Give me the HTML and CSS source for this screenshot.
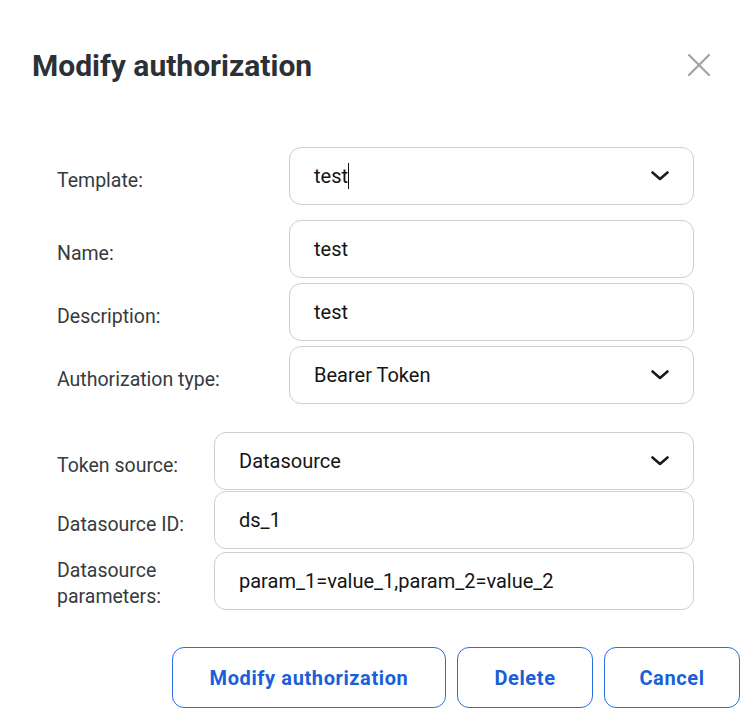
FILE: index.html
```html
<!DOCTYPE html>
<html>
<head>
<meta charset="utf-8">
<link rel="stylesheet" href="styles.css">
</head>
<body>
<div class="dialog">
  <div class="header">
    <h1 class="title">Modify authorization</h1>
    <button class="close" aria-label="Close">
      <svg width="22" height="22" viewBox="0 0 22 22"><path d="M1 1 L21 21 M21 1 L1 21" stroke="#a3a3a3" stroke-width="2.2" fill="none" stroke-linecap="round"/></svg>
    </button>
  </div>
  <div class="form">
    <div class="group group-a">
      <div class="row r-first">
        <label class="label">Template:</label>
        <div class="field select"><span class="value">test<span class="caret"></span></span>
          <svg class="chev" width="18" height="10" viewBox="0 0 18 10"><path d="M1.5 1.5 L9 8 L16.5 1.5" stroke="#1b1b1b" stroke-width="2.6" fill="none" stroke-linecap="round" stroke-linejoin="round"/></svg>
        </div>
      </div>
      <div class="row r-name">
        <label class="label">Name:</label>
        <div class="field"><span class="value">test</span></div>
      </div>
      <div class="row r-tight">
        <label class="label">Description:</label>
        <div class="field"><span class="value">test</span></div>
      </div>
      <div class="row r-tight">
        <label class="label">Authorization type:</label>
        <div class="field select"><span class="value">Bearer Token</span>
          <svg class="chev" width="18" height="10" viewBox="0 0 18 10"><path d="M1.5 1.5 L9 8 L16.5 1.5" stroke="#1b1b1b" stroke-width="2.6" fill="none" stroke-linecap="round" stroke-linejoin="round"/></svg>
        </div>
      </div>
    </div>
    <div class="group group-b">
      <div class="row">
        <label class="label">Token source:</label>
        <div class="field select"><span class="value">Datasource</span>
          <svg class="chev" width="18" height="10" viewBox="0 0 18 10"><path d="M1.5 1.5 L9 8 L16.5 1.5" stroke="#1b1b1b" stroke-width="2.6" fill="none" stroke-linecap="round" stroke-linejoin="round"/></svg>
        </div>
      </div>
      <div class="row r-adj">
        <label class="label">Datasource ID:</label>
        <div class="field"><span class="value">ds_1</span></div>
      </div>
      <div class="row r-tight2">
        <label class="label label-2">Datasource parameters:</label>
        <div class="field"><span class="value">param_1=value_1,param_2=value_2</span></div>
      </div>
    </div>
  </div>
  <div class="actions">
    <button class="btn btn-modify">Modify authorization</button>
    <button class="btn btn-delete">Delete</button>
    <button class="btn btn-cancel">Cancel</button>
  </div>
</div>
</body>
</html>
```
FILE: styles.css
```css
html, body {
  margin: 0;
  padding: 0;
  background: #ffffff;
}
body {
  font-family: Roboto, "Liberation Sans", sans-serif;
  color: #2f3438;
}
.dialog {
  width: 747px;
  height: 721px;
  box-sizing: border-box;
  padding: 40px 0 0 0;
}
.header {
  display: flex;
  align-items: center;
  justify-content: space-between;
  padding: 0 37px 0 32px;
  height: 50px;
}
.title {
  margin: 0;
  font-size: 30px;
  font-weight: 700;
  color: #2b3137;
  letter-spacing: 0;
}
.close {
  border: 0;
  background: none;
  padding: 0;
  width: 22px;
  height: 22px;
  display: flex;
}
.form {
  padding: 57px 53px 0 57px;
}
.row {
  display: flex;
  align-items: center;
}
.group-a .label { width: 232px; }
.group-b .label { width: 157px; }
.group-b { margin-top: 28px; }
.r-name { margin-top: 15px; }
.r-tight { margin-top: 5px; }
.r-adj { margin-top: 1px; }
.r-tight2 { margin-top: 3px; }
.label {
  flex: none;
  font-size: 19.5px;
  color: #363b40;
  line-height: 27px;
  padding-top: 8px;
  padding-right: 16px;
  box-sizing: border-box;
}
.label-2 {
  line-height: 26px;
  padding-top: 6px;
}
.field {
  flex: 1;
  height: 58px;
  box-sizing: border-box;
  border: 1px solid #cfcfcf;
  border-radius: 12px;
  display: flex;
  align-items: center;
  justify-content: space-between;
  padding: 0 24px 0 24px;
}
.value {
  font-size: 20px;
  color: #151515;
  display: flex;
  align-items: center;
}
.caret {
  display: inline-block;
  width: 1px;
  height: 26px;
  background: #111;
}
.chev { flex: none; }
.actions {
  display: flex;
  justify-content: flex-end;
  gap: 11px;
  padding: 37px 7px 0 0;
}
.btn {
  height: 61px;
  box-sizing: border-box;
  border: 1.5px solid #2a6ee0;
  border-radius: 12px;
  background: #fff;
  color: #1a5fd8;
  font-family: Roboto, "Liberation Sans", sans-serif;
  font-weight: 700;
  font-size: 20px;
  letter-spacing: 0.6px;
}
.btn-modify { width: 274px; }
.btn-delete { width: 136px; }
.btn-cancel { width: 136px; }
```
